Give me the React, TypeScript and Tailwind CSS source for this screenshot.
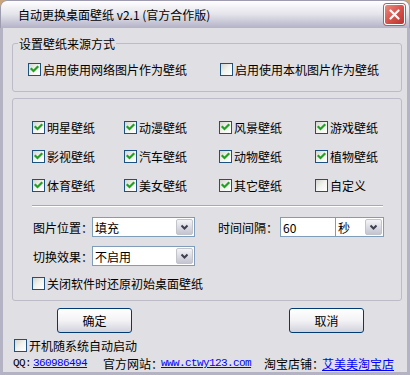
import React from 'react';

const FONT = '"Noto Sans CJK SC", "Noto Sans", sans-serif';
const MONO = '"Liberation Mono", monospace';

const Box: React.FC<{ checked?: boolean }> = ({ checked }) => (
  <span className="w-[13px] h-[13px] shrink-0 border border-[#1c5180] bg-gradient-to-br from-[#d6d6d0] via-[#f2f2ee] to-white flex items-center justify-center">
    {checked && (
      <svg width="11" height="11" viewBox="0 0 11 11">
        <polyline points="2.5,5 4.5,7 8.5,3" fill="none" stroke="#21a121" strokeWidth="2.2" strokeLinecap="square" />
      </svg>
    )}
  </span>
);

const CheckItem: React.FC<{ label: string; checked?: boolean; className?: string }> = ({ label, checked, className }) => (
  <label className={`flex items-center h-[13px] ${className ?? ''}`}>
    <Box checked={checked} />
    <span className="ml-[2px] leading-[13px] whitespace-nowrap">{label}</span>
  </label>
);

const Arrow = () => (
  <span className="w-[17px] h-[16px] mr-[1px] rounded-[2px] border border-[#c3c3cc] bg-gradient-to-b from-[#f4f4f8] to-[#c4c4d2] flex items-center justify-center shrink-0">
    <svg width="9" height="6" viewBox="0 0 9 6">
      <polyline points="1.5,1.5 4.5,4.5 7.5,1.5" fill="none" stroke="#3f3f50" strokeWidth="2" />
    </svg>
  </span>
);

const Combo: React.FC<{ value: string; className: string }> = ({ value, className }) => (
  <div className={`h-[20px] border border-[#7f9db9] bg-white flex items-center ${className}`}>
    <span className="flex-1 pl-[2px] leading-[13px]">{value}</span>
    <Arrow />
  </div>
);

const Button: React.FC<{ label: string }> = ({ label }) => (
  <button className="w-[75px] h-[25px] rounded-[3px] border border-[#003c74] bg-gradient-to-b from-white via-[#f3f3f6] to-[#d2d2dc] flex items-center justify-center leading-[13px]">
    {label}
  </button>
);

const categories: [string, boolean][] = [
  ['明星壁纸', true], ['动漫壁纸', true], ['风景壁纸', true], ['游戏壁纸', true],
  ['影视壁纸', true], ['汽车壁纸', true], ['动物壁纸', true], ['植物壁纸', true],
  ['体育壁纸', true], ['美女壁纸', true], ['其它壁纸', true], ['自定义', false],
];

export default function App() {
  return (
    <div className="w-[410px] h-[375px] bg-[#c9a57c] text-[12px] text-black" style={{ fontFamily: FONT }}>
      <div className="w-full h-full flex flex-col rounded-t-[7px] overflow-hidden">
        {/* title bar */}
        <div className="h-[28px] shrink-0 flex items-center pl-[17px] pr-[4px] bg-gradient-to-b from-white via-[#e3e3ea] to-[#b3b2c7] border-t border-x border-[#9c9cae] rounded-t-[7px]">
          <span className="leading-[13px]">自动更换桌面壁纸 v2.1 (官方合作版)</span>
          <span className="ml-auto w-[21px] h-[21px] rounded-[3px] border border-white bg-gradient-to-br from-[#e98a80] via-[#d9534d] to-[#b8322f] flex items-center justify-center shadow-[0_0_0_1px_#b06060]">
            <svg width="11" height="11" viewBox="0 0 11 11">
              <path d="M1.5 1.5 L9.5 9.5 M9.5 1.5 L1.5 9.5" stroke="white" strokeWidth="2.2" strokeLinecap="round" />
            </svg>
          </span>
        </div>

        {/* body */}
        <div className="flex-1 flex flex-col bg-[#e0dfe3] border-x-[3px] border-b-[3px] border-[#b4b3c4]">
          {/* source group */}
          <div className="mt-[15px] ml-[9px] w-[390px] h-[49px] border border-[#bdbcc6] rounded-[3px] flex flex-col">
            <span className="-mt-[7px] ml-[5px] px-[1px] w-fit h-[13px] leading-[13px] bg-[#e0dfe3]">设置壁纸来源方式</span>
            <div className="mt-[13px] pl-[15px] flex">
              <CheckItem label="启用使用网络图片作为壁纸" checked className="w-[192px]" />
              <CheckItem label="启用使用本机图片作为壁纸" />
            </div>
          </div>

          {/* options group */}
          <div className="mt-[6px] ml-[9px] w-[390px] h-[203px] border border-[#bdbcc6] rounded-[3px] flex flex-col pl-[19px]">
            <div className="mt-[22px] grid grid-cols-[92px_95px_96px_auto] gap-y-[16px]">
              {categories.map(([name, on]) => (
                <CheckItem key={name} label={name} checked={on} />
              ))}
            </div>

            <div className="mt-[13px] w-[351px] h-[2px] border-t border-[#a9a8b4] border-b border-b-white" />

            <div className="mt-[10px] flex items-center">
              <span className="w-[60px] shrink-0 pl-[1px] leading-[13px] whitespace-nowrap">图片位置：</span>
              <Combo value="填充" className="w-[103px]" />
              <span className="ml-[23px] w-[62px] shrink-0 leading-[13px] whitespace-nowrap">时间间隔：</span>
              <div className="w-[56px] h-[20px] border border-[#7f9db9] bg-white flex items-center pl-[2px] leading-[13px]">60</div>
              <Combo value="秒" className="w-[49px] -ml-[1px]" />
            </div>

            <div className="mt-[9px] flex items-center">
              <span className="w-[60px] shrink-0 pl-[1px] leading-[13px] whitespace-nowrap">切换效果：</span>
              <Combo value="不启用" className="w-[103px]" />
            </div>

            <CheckItem label="关闭软件时还原初始桌面壁纸" className="mt-[11px]" />
          </div>

          {/* buttons */}
          <div className="mt-[7px] pl-[54px] flex gap-[157px]">
            <Button label="确定" />
            <Button label="取消" />
          </div>

          <CheckItem label="开机随系统自动启动" className="mt-[6px] ml-[11px]" />

          {/* footer */}
          <div className="mt-[5px] pl-[10px] h-[13px] flex items-center leading-[13px] whitespace-nowrap">
            <span className="w-[20px] text-[11px] tracking-[-0.6px]" style={{ fontFamily: MONO }}>QQ:</span>
            <a className="w-[70px] text-[11px] tracking-[-0.6px] text-[#0000ff] underline" style={{ fontFamily: MONO }}>360986494</a>
            <span className="w-[58px]">官方网站：</span>
            <a className="w-[103px] text-[11px] tracking-[-0.6px] text-[#0000ff] underline" style={{ fontFamily: MONO }}>www.ctwy123.com</a>
            <span className="w-[58px]">淘宝店铺：</span>
            <a className="text-[#0000ff] underline">艾美美淘宝店</a>
          </div>
        </div>
      </div>
    </div>
  );
}
